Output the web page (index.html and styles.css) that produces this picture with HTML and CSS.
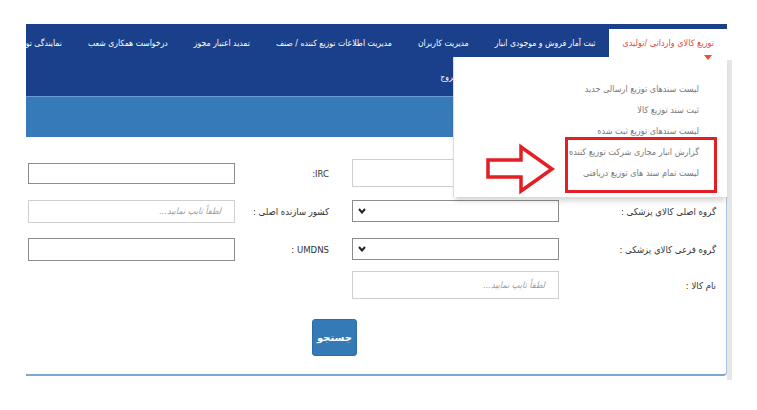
FILE: index.html
```html
<!DOCTYPE html>
<html lang="fa" dir="rtl">
<head>
<meta charset="utf-8">
<title>توزیع کالا</title>
<link rel="stylesheet" href="styles.css">
</head>
<body>
<div class="page">
  <div class="main">
    <header class="header">
      <ul class="nav-row">
        <li class="nav-item active">توزیع کالای وارداتی /تولیدی</li>
        <li class="nav-item">ثبت آمار فروش و موجودی انبار</li>
        <li class="nav-item">مدیریت کاربران</li>
        <li class="nav-item">مدیریت اطلاعات توزیع کننده / صنف</li>
        <li class="nav-item">تمدید اعتبار مجوز</li>
        <li class="nav-item">درخواست همکاری شعب</li>
        <li class="nav-item">نمایندگی توزیع</li>
      </ul>
      <ul class="nav-row second">
        <li class="nav-item">خروج</li>
      </ul>
      <div class="dropdown">
        <span class="caret"></span>
        <a class="dd-item">لیست سندهای توزیع ارسالی جدید</a>
        <a class="dd-item">ثبت سند توزیع کالا</a>
        <a class="dd-item">لیست سندهای توزیع ثبت شده</a>
        <a class="dd-item">گزارش انبار مجازی شرکت توزیع کننده</a>
        <a class="dd-item">لیست تمام سند های توزیع دریافتی</a>
      </div>
    </header>
    <div class="bar"></div>
    <section class="panel">
      <div class="form-grid">
        <div class="label"></div>
        <div class="field"><div class="input light tall"></div></div>
        <div class="label col2">IRC:</div>
        <div class="field"><div class="input dark short"></div></div>

        <div class="label">گروه اصلی کالای پزشکی :</div>
        <div class="field"><div class="select"><svg class="chev" viewBox="0 0 8 6" width="8" height="6"><polyline points="1,1 4,4.5 7,1" fill="none" stroke="#222" stroke-width="2"/></svg></div></div>
        <div class="label col2">کشور سازنده اصلی :</div>
        <div class="field"><div class="input light mid"><span class="ph">لطفاً تایپ نمایید...</span></div></div>

        <div class="label">گروه فرعی کالای پزشکی :</div>
        <div class="field"><div class="select"><svg class="chev" viewBox="0 0 8 6" width="8" height="6"><polyline points="1,1 4,4.5 7,1" fill="none" stroke="#222" stroke-width="2"/></svg></div></div>
        <div class="label col2">UMDNS :</div>
        <div class="field"><div class="input dark mid"></div></div>

        <div class="label">نام کالا :</div>
        <div class="field"><div class="input light tall"><span class="ph">لطفاً تایپ نمایید...</span></div></div>
        <div class="label col2"></div>
        <div class="field"></div>

        <div class="btn-cell"><button class="btn">جستجو</button></div>
      </div>
    </section>
    <div class="annot-box"></div>
    <svg class="annot-arrow" viewBox="0 0 72 52" width="72" height="52">
      <polygon points="3,17 36,17 36,4 67,26 36,48 36,34 3,34" fill="#fff" stroke="#e31e24" stroke-width="3.5" stroke-linejoin="miter"/>
    </svg>
  </div>
  <div class="rail"></div>
</div>
</body>
</html>
```
FILE: styles.css
```css
* { box-sizing: border-box; }
html, body { margin: 0; padding: 0; background: #fff; }
body {
  font-family: "DejaVu Sans", sans-serif;
  font-size: 11px;
  color: #333;
  width: 757px;
  height: 410px;
  overflow: hidden;
}
.page {
  display: flex;
  flex-direction: row;
  align-items: flex-start;
  padding-top: 24px;
  padding-left: 26px;
  direction: ltr;
}
.main {
  position: relative;
  flex: none;
  width: 701px;
  direction: rtl;
}
.rail {
  flex: none;
  width: 5px;
  height: 320px;
  margin-top: 36px;
  background: #e6e6e6;
}
.header {
  position: relative;
  height: 72px;
  background: #1a3f8b;
  padding-top: 5px;
}
.nav-row {
  list-style: none;
  margin: 0;
  padding: 0;
  display: flex;
  flex-wrap: nowrap;
  overflow: hidden;
  height: 28px;
}
.nav-item {
  flex: none;
  color: #fff;
  padding: 0 13px 0 13px;
  line-height: 28px;
  font-size: 8.6px;
  font-family: "DejaVu Sans Condensed", "DejaVu Sans", sans-serif;
  white-space: nowrap;
}
.nav-item.active {
  background: #fff;
  color: #e5473d;
  font-size: 9px;
  padding: 0 13px 0 14px;
}
.caret {
  position: absolute;
  right: 15px;
  top: -2px;
  width: 0;
  height: 0;
  border-left: 4px solid transparent;
  border-right: 4px solid transparent;
  border-top: 5px solid #e8502e;
}
.nav-row.second {
  margin-top: 6px;
  padding-right: 256px;
}
.dropdown {
  position: absolute;
  top: 33px;
  right: 0;
  width: 274px;
  height: 140px;
  background: #fff;
  border-left: 1px solid #dcdcdc;
  box-shadow: 0 6px 5px -2px rgba(0,0,0,0.16);
  padding: 22px 28px 0 0;
  z-index: 5;
  display: flex;
  flex-direction: column;
}
.dd-item {
  display: block;
  color: #7a7a7a;
  font-size: 9px;
  font-family: "DejaVu Sans Condensed", "DejaVu Sans", sans-serif;
  line-height: 21px;
  white-space: nowrap;
}
.bar {
  height: 41px;
  background: #367ab9;
  border-top: 1px solid #6a9bd0;
}
.panel {
  border-right: 1px solid #a9c5e4;
  border-bottom: 2px solid #7ea6d3;
  border-bottom-right-radius: 4px;
  padding: 18px 10px 18px 2px;
}
.form-grid {
  display: grid;
  grid-template-columns: 157px 207px 117px 207px;
  grid-template-rows: 36px 40px 36px 36px auto;
  align-items: center;
}
.label {
  font-size: 9.5px;
  font-family: "DejaVu Sans Condensed", "DejaVu Sans", sans-serif;
  color: #333;
  white-space: nowrap;
  text-align: right;
}
.label.col2 { padding-right: 23px; }
.field { display: flex; align-items: center; }
.input {
  width: 207px;
  background: #fff;
  display: flex;
  align-items: center;
  padding-right: 13px;
}
.input.light { border: 1px solid #cfcfcf; }
.input.dark { border: 1px solid #8c8c8c; }
.input.tall { height: 28px; }
.input.mid { height: 23px; }
.input.short { height: 21px; }
.ph {
  font-size: 9px;
  font-style: italic;
  font-family: "DejaVu Sans Condensed", "DejaVu Sans", sans-serif;
  color: #9a9a9a;
}
.select {
  width: 207px;
  height: 22px;
  border: 1px solid #8c8c8c;
  background: #fff;
  display: flex;
  align-items: center;
  justify-content: flex-end;
  padding-left: 5px;
}
.chev { display: block; }
.btn-cell {
  grid-column: 3;
  display: flex;
  padding-top: 16px;
  margin-right: -5px;
}
.btn {
  width: 45px;
  height: 37px;
  background: #337ab7;
  border: 1px solid #2e6da4;
  border-radius: 3px;
  color: #fff;
  font-family: "DejaVu Sans", sans-serif;
  font-size: 10px;
  font-weight: bold;
  padding: 0;
}
.annot-box {
  position: absolute;
  left: 539px;
  top: 113px;
  width: 152px;
  height: 56px;
  border: 3px solid #e31e24;
  z-index: 6;
}
.annot-arrow {
  position: absolute;
  left: 459px;
  top: 119px;
  z-index: 6;
}
```
